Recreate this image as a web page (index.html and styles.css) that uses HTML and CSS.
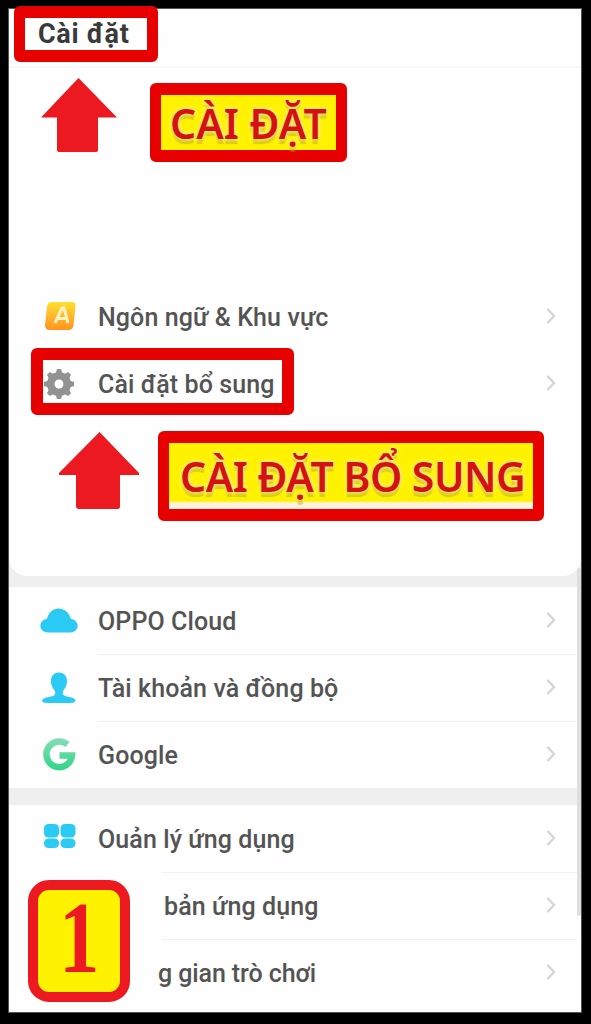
FILE: index.html
```html
<!DOCTYPE html>
<html lang="vi">
<head>
<meta charset="utf-8">
<title>Cài đặt</title>
<link rel="stylesheet" href="styles.css">
</head>
<body>
<main class="screen">
  <header class="header"><h1 class="title">Cài đặt</h1></header>
  <section class="card card-top">
    <div class="note note-first">
      <svg class="arrow arrow-first" viewBox="0 0 76 75"><path d="M37.500 0L76 39.500H57V72.500Q57 74 54.500 74H19Q16 74 16 72V39.500H0Z"/></svg>
      <div class="callout callout-first"><span>CÀI ĐẶT</span></div>
    </div>
    <div class="row">
      <svg class="icon" viewBox="0 0 38 38"><defs><linearGradient id="sun" x1="0" y1="0" x2="0" y2="1"><stop offset="0" stop-color="#ffe02e"/><stop offset=".5" stop-color="#ffb62e"/><stop offset="1" stop-color="#ff941c"/></linearGradient></defs><path d="M12 4H32Q36 4 35.500 8L33.500 27Q33 32 28 32H10Q5 32 5 27L7 9Q7.500 4 12 4Z" fill="url(#sun)"/><path d="M15 25L22 10H24L28 25M17 20.500H27" fill="none" stroke="#fff3c0" stroke-width="3"/></svg>
      <span class="label">Ngôn ngữ &amp; Khu vực</span>
      <svg class="chev" viewBox="0 0 10 18"><path d="M1.500 2L8 9L1.500 16"/></svg>
    </div>
    <div class="row">
      <svg class="icon" viewBox="0 0 38 38"><g fill="#929292"><circle cx="19" cy="19" r="12"/><g id="teeth"><path d="M17 4h4l2 6.500h-8zM17 34h4l2-6.500h-8zM4 17v4l6.500 2v-8zM34 17v4l-6.500 2v-8z"/></g><use href="#teeth" transform="rotate(45 19 19)"/></g><circle cx="19" cy="19" r="4.500" fill="#fff"/></svg>
      <span class="label">Cài đặt bổ sung</span>
      <svg class="chev" viewBox="0 0 10 18"><path d="M1.500 2L8 9L1.500 16"/></svg>
      <div class="highlight"></div>
    </div>
    <div class="note note-second">
      <svg class="arrow arrow-second" viewBox="0 0 80 77"><path d="M40.500 0L80 41V43H61V74.500Q61 77 58.500 77H20Q17 77 17 74V43H0V41Z"/></svg>
      <div class="callout callout-second"><span>CÀI ĐẶT BỔ SUNG</span></div>
    </div>
  </section>
  <section class="card card-mid">
    <div class="row">
      <svg class="icon" viewBox="0 0 38 38"><path d="M8 30.500C-2 30.500-2 18 7 17C10 3 27 3 31 17C40 18 40 30.500 30 30.500Z" fill="#2acaf4"/></svg>
      <span class="label">OPPO Cloud</span>
      <svg class="chev" viewBox="0 0 10 18"><path d="M1.500 2L8 9L1.500 16"/></svg>
    </div>
    <div class="row line">
      <svg class="icon" viewBox="0 0 38 38"><path d="M19 3.500C24 3.500 27 7 27 12C27 17 25 19 23 22C22 26 24 27 29 28Q35 29 35.500 31.500Q35 34 30 34H8Q2 34 2 31.500Q3 29 9 28C14 27 16 26 15 22C13 19 11 17 11 12C11 7 14 3.500 19 3.500Z" fill="#2acaf4"/></svg>
      <span class="label">Tài khoản và đồng bộ</span>
      <svg class="chev" viewBox="0 0 10 18"><path d="M1.500 2L8 9L1.500 16"/></svg>
    </div>
    <div class="row line">
      <svg class="icon" viewBox="0 0 38 38"><defs><linearGradient id="mint" x1="0" y1="0" x2="0" y2="1"><stop offset="0" stop-color="#7edcb4"/><stop offset="1" stop-color="#38d68c"/></linearGradient></defs><path d="M27.500 9A12.800 12.800 0 1 0 32 20H19.500" transform="translate(0 -.5)" fill="none" stroke="url(#mint)" stroke-width="6.500"/></svg>
      <span class="label">Google</span>
      <svg class="chev" viewBox="0 0 10 18"><path d="M1.500 2L8 9L1.500 16"/></svg>
    </div>
  </section>
  <section class="card card-low">
    <div class="row">
      <svg class="icon" viewBox="0 0 38 38"><g fill="#2acaf4"><rect x="4" y="4" width="15" height="13.500" rx="4.500"/><rect x="20.500" y="4" width="15" height="13.500" rx="4.500"/><rect x="4" y="18.500" width="15" height="9.500" rx="4.500"/><rect x="20.500" y="18.500" width="15" height="9.500" rx="4.500"/></g></svg>
      <span class="label">Ouản lý ứng dụng</span>
      <svg class="chev" viewBox="0 0 10 18"><path d="M1.500 2L8 9L1.500 16"/></svg>
    </div>
    <div class="row line cut">
      <span class="label">bản ứng dụng</span>
      <svg class="chev" viewBox="0 0 10 18"><path d="M1.500 2L8 9L1.500 16"/></svg>
    </div>
    <div class="row line cut cut-game">
      <span class="label tight">g gian trò chơi</span>
      <svg class="chev" viewBox="0 0 10 18"><path d="M1.500 2L8 9L1.500 16"/></svg>
    </div>
  </section>
  <div class="step"><span class="digit">1</span></div>
  <div class="scrollbar"></div>
</main>
</body>
</html>
```
FILE: styles.css
```css
* { box-sizing: border-box; }
body { margin: 0; padding: 9px 10px 12px 9px; height: 1024px; background: #000; font-family: Roboto, "Noto Sans", sans-serif; color: #545454; overflow: hidden; }
.screen { position: relative; height: 1003px; background: #efefef; display: flex; flex-direction: column; box-shadow: 0 0 0 1px #555; }
.card { background: #fefefe; }
.header { height: 59px; background: #fefefe; border-bottom: 2px solid #f8f8f8; padding-left: 5px; flex: none; }
.title { margin: -3px 0 0; width: 144px; height: 56px; border: 11px solid #e60000; border-top-width: 12px; border-bottom-width: 12px; border-radius: 6px; position: relative; padding-left: 13px; font-size: 27px; line-height: 33px; letter-spacing: .7px; font-weight: 700; color: #3a3a3a; white-space: nowrap; }
.card-top { height: 508px; border-radius: 0 0 18px 18px; }
.note { display: flex; align-items: flex-start; }
.note-first { height: 215px; padding: 10px 0 0 32px; }
.note-second { padding: 14px 0 0 50px; }
.arrow { fill: #ec1a20; flex: none; }
.arrow-first { width: 76px; height: 75px; }
.arrow-second { width: 80px; height: 77px; margin-top: 1px; }
.callout { border: 12px solid #e60000; border-width: 12px 11px; border-radius: 6px; background: #fff200; color: #d51212; font-family: "Noto Sans", sans-serif; font-weight: 600; white-space: nowrap; text-shadow: 0 0 3px #f6e9a0, 0 0 5px #f6e9a0, 0 5px 1px #b5a51a80; }
.callout-first { width: 197px; height: 79px; margin: 5px 0 0 33px; padding-left: 9px; font-size: 41px; line-height: 56px; }
.callout-second { width: 386px; height: 90px; margin-left: 19px; padding-left: 11px; font-size: 41px; letter-spacing: -.5px; line-height: 66px; background: linear-gradient(#fff200 58px, #fff3df 60px); }
.row { position: relative; height: 67.200px; display: flex; align-items: center; padding: 0 25px 0 31px; }
.line::before { content: ""; position: absolute; top: 0; left: 88px; right: 4px; height: 1px; background: #f2f2f2; }
.icon { width: 38px; height: 38px; flex: none; }
.label { margin: 2px 0 0 20px; flex: 1; font-size: 25px; font-weight: 500; letter-spacing: .1px; line-height: 34px; white-space: nowrap; }
.tight { letter-spacing: -.1px; }
.chev { width: 10px; height: 18px; flex: none; fill: none; stroke: #d6d6d6; stroke-width: 2.500; margin-top: -1px; }
.highlight { position: absolute; left: 22px; top: -2px; width: 263px; height: 67px; border: 12px solid #e60000; border-radius: 6px; }
.card-mid { margin-top: 11px; height: 201px; }
.card-low { margin-top: 17px; flex: 1; }
.cut { padding-left: 135px; }
.cut-game { padding-left: 129px; }
.cut::before { left: 153px; }
.step { position: absolute; left: 19px; top: 871px; width: 102px; height: 122px; border: 10px solid #ec1a20; border-radius: 21px; background: #fff200; display: flex; justify-content: center; color: #ec1a20; }
.digit { font: 700 101px/96px "Liberation Serif", serif; transform: scaleX(.8); }
.scrollbar { position: absolute; right: 0; top: 559px; width: 4px; height: 348px; background: #dedede; border-radius: 2px; }
```
